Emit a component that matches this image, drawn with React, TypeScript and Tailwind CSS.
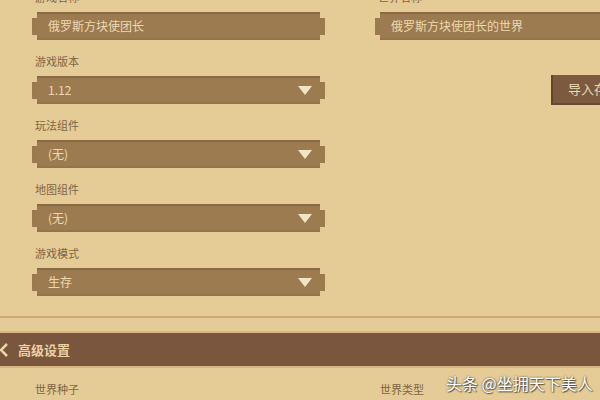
const font = { fontFamily: '"Noto Sans CJK SC", "Noto Sans", sans-serif' };

function Label({ children }: { children: string }) {
  return <div className="pl-[3px] mb-[8px] text-[11px] leading-[14px] text-[#7d6646]">{children}</div>;
}

function Field({ value, dropdown = false }: { value: string; dropdown?: boolean }) {
  return (
    <div className="flex items-center h-[28px]">
      <div className="w-[5px] h-[17px] bg-[#9b7a4f]" />
      <div className="flex-1 h-[28px] flex items-center justify-between bg-[#9d7b50] border-t-2 border-t-[#8a6a43] border-b-2 border-b-[#94744a] pl-[11px] pr-[8px]">
        <span className="text-[12px] text-[#ecd9b0] whitespace-nowrap">{value}</span>
        {dropdown && (
          <svg width="14" height="9" viewBox="0 0 14 9">
            <polygon points="0,0 14,0 7,9" fill="#f3e4c4" />
          </svg>
        )}
      </div>
      <div className="w-[5px] h-[17px] bg-[#9b7a4f]" />
    </div>
  );
}

function Group({ label, value, dropdown }: { label: string; value: string; dropdown?: boolean }) {
  return (
    <div className="flex flex-col">
      <Label>{label}</Label>
      <Field value={value} dropdown={dropdown} />
    </div>
  );
}

export default function App() {
  return (
    <div className="relative w-[600px] h-[400px] overflow-hidden bg-[#e5cb96]" style={font}>
      <div className="flex pl-[32px] mt-[-10px]">
        <div className="w-[293px] flex flex-col gap-[14px] shrink-0">
          <Group label="游戏名称" value="俄罗斯方块使团长" />
          <Group label="游戏版本" value="1.12" dropdown />
          <Group label="玩法组件" value="(无)" dropdown />
          <Group label="地图组件" value="(无)" dropdown />
          <Group label="游戏模式" value="生存" dropdown />
        </div>
        <div className="ml-[50px] w-[293px] flex flex-col shrink-0">
          <Group label="世界名称" value="俄罗斯方块使团长的世界" />
          <div className="mt-[35px] ml-[176px] w-[120px] h-[30px] flex items-center pl-[15px] bg-[#7b5a40] border-l-2 border-l-[#5f4430] border-b-2 border-b-[#664a34] text-[13px] text-[#ecd9b0] whitespace-nowrap">
            导入存档
          </div>
        </div>
      </div>

      <div className="mt-[20px] h-[2px] bg-[#c9a874]" />

      <div className="mt-[13px] h-[37px] flex items-center gap-[9px] bg-[#7a563e] border-y-2 border-y-[#d8b585]">
        <svg width="10" height="14" viewBox="0 0 10 14" className="ml-[-1px]">
          <polyline points="8,1 2,7 8,13" fill="none" stroke="#ead4a8" strokeWidth="2.5" />
        </svg>
        <span className="text-[13px] font-bold text-[#e9d1a2]">高级设置</span>
      </div>

      <div className="flex mt-[14px] text-[11px] leading-[14px] text-[#7d6646]">
        <div className="pl-[35px] w-[380px]">世界种子</div>
        <div>世界类型</div>
      </div>

      <div
        className="absolute left-[446px] top-[371px] text-[16px] text-white whitespace-nowrap"
        style={{ textShadow: '0 0 2px rgba(0,0,0,0.7), 1px 1px 1px rgba(0,0,0,0.5)' }}
      >
        头条 @坐拥天下美人
      </div>
    </div>
  );
}
